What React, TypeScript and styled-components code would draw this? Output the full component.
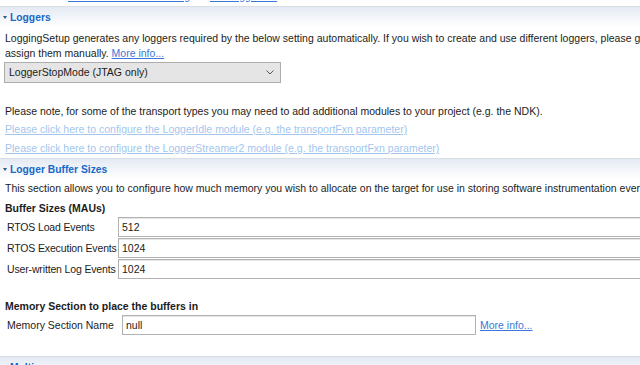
import React from 'react';
import styled, {createGlobalStyle} from 'styled-components';

const GlobalStyle = createGlobalStyle`
  html, body {
    margin: 0;
    padding: 0;
    background: #ffffff;
  }
  body {
    font-family: 'Liberation Sans', Arial, sans-serif;
    font-size: 10.5px;
    color: #1c1c1c;
  }
`;

const Page = styled.div`
  width: 640px;
  height: 365px;
  overflow: hidden;
  background: #ffffff;
`;

const TopClip = styled.div`
  height: 3px;
  margin-bottom: 3px;
  overflow: hidden;
  display: flex;
  align-items: flex-end;
  padding-left: 68px;
  gap: 20px;
  line-height: 14px;
`;

const SectionHeader = styled.div<{$mt?: number}>`
  display: flex;
  align-items: center;
  gap: 3px;
  height: 20px;
  margin-top: ${p => p.$mt || 0}px;
  padding-left: 3px;
  border-top: 1px solid #d9dee6;
  background: linear-gradient(#e4eaf3, #ffffff);
  color: #1668c8;
  font-weight: bold;
  font-size: 10.3px;
`;

const Caret = styled.span`
  width: 0;
  height: 0;
  border-left: 2.5px solid transparent;
  border-right: 2.5px solid transparent;
  border-top: 3px solid #2a5a9a;
  margin-top: 1px;
`;

const Body = styled.div<{$pad?: string}>`
  padding: ${p => p.$pad || '4px 5px 0 5px'};
  line-height: 15px;
  white-space: nowrap;
`;

const Para = styled.div<{$mt?: number}>`
  margin-top: ${p => p.$mt || 0}px;
`;

const Link = styled.a<{$faded?: boolean}>`
  color: ${p => (p.$faded ? '#a3c6ee' : '#3a77d6')};
  text-decoration: underline;
  cursor: pointer;
`;

const FadedLine = styled.div<{$mt: number}>`
  margin-top: ${p => p.$mt}px;
`;

const Combo = styled.div`
  display: flex;
  align-items: center;
  justify-content: space-between;
  width: 265px;
  height: 19px;
  margin: 1px 0 0 -1px;
  padding: 0 6px 0 4px;
  background: #e5e5e5;
  border: 1px solid #adadad;
`;

const Heading = styled.div<{$mt?: number}>`
  font-weight: bold;
  margin-top: ${p => p.$mt || 0}px;
`;

const FieldGrid = styled.div`
  display: grid;
  grid-template-columns: 111px 1fr;
  row-gap: 1px;
  margin-top: 1px;
  padding-left: 2px;
`;

const FieldLabel = styled.div`
  display: flex;
  align-items: center;
  height: 20px;
  letter-spacing: -0.15px;
`;

const Field = styled.div<{$width?: number}>`
  display: flex;
  flex-shrink: 0;
  align-items: center;
  height: 18px;
  width: ${p => (p.$width ? `${p.$width}px` : 'calc(100% + 40px)')};
  padding-left: 3px;
  border: 1px solid #b2b2b2;
  box-shadow: inset 0 1px 0 #e6e6e6;
  background: #ffffff;
  letter-spacing: 0;
`;

const MemRow = styled.div`
  display: flex;
  align-items: center;
  gap: 4px;
  margin-top: 1px;
  padding-left: 2px;
`;

const MemLabel = styled.div`
  width: 111px;
`;

const Chevron = () => (
  <svg width="8" height="5" viewBox="0 0 8 5">
    <path d="M0.5 0.5 L4 4 L7.5 0.5" fill="none" stroke="#555" strokeWidth="1" />
  </svg>
);

const fields = [
  {label: 'RTOS Load Events', value: '512'},
  {label: 'RTOS Execution Events', value: '1024'},
  {label: 'User-written Log Events', value: '1024'},
];

export default function App() {
  return (
    <Page>
      <GlobalStyle />
      <TopClip>
        <Link>Please click here to config</Link>
        <Link>the LoggerIdle</Link>
      </TopClip>
      <SectionHeader>
        <Caret />
        Loggers
      </SectionHeader>
      <Body>
        <Para>
          LoggingSetup generates any loggers required by the below setting automatically. If you wish
          to create and use different loggers, please go to the advanced page and
        </Para>
        <Para>
          assign them manually. <Link>More info...</Link>
        </Para>
        <Combo>
          <span>LoggerStopMode (JTAG only)</span>
          <Chevron />
        </Combo>
        <Para $mt={21}>
          Please note, for some of the transport types you may need to add additional modules to your
          project (e.g. the NDK).
        </Para>
        <FadedLine $mt={3}>
          <Link $faded>Please click here to configure the LoggerIdle module (e.g. the transportFxn parameter)</Link>
        </FadedLine>
        <FadedLine $mt={4}>
          <Link $faded>
            Please click here to configure the LoggerStreamer2 module (e.g. the transportFxn parameter)
          </Link>
        </FadedLine>
      </Body>
      <SectionHeader $mt={2}>
        <Caret />
        Logger Buffer Sizes
      </SectionHeader>
      <Body $pad="2px 5px 0 5px">
        <Para>
          This section allows you to configure how much memory you wish to allocate on the target for
          use in storing software instrumentation events.
        </Para>
        <Heading $mt={5}>Buffer Sizes (MAUs)</Heading>
        <FieldGrid>
          {fields.map(f => (
            <React.Fragment key={f.label}>
              <FieldLabel>{f.label}</FieldLabel>
              <FieldLabel>
                <Field>{f.value}</Field>
              </FieldLabel>
            </React.Fragment>
          ))}
        </FieldGrid>
        <Heading $mt={20}>Memory Section to place the buffers in</Heading>
        <MemRow>
          <MemLabel>Memory Section Name</MemLabel>
          <Field $width={349}>null</Field>
          <Link>More info...</Link>
        </MemRow>
      </Body>
      <SectionHeader $mt={21}>
        <Caret />
        Multi...
      </SectionHeader>
    </Page>
  );
}
